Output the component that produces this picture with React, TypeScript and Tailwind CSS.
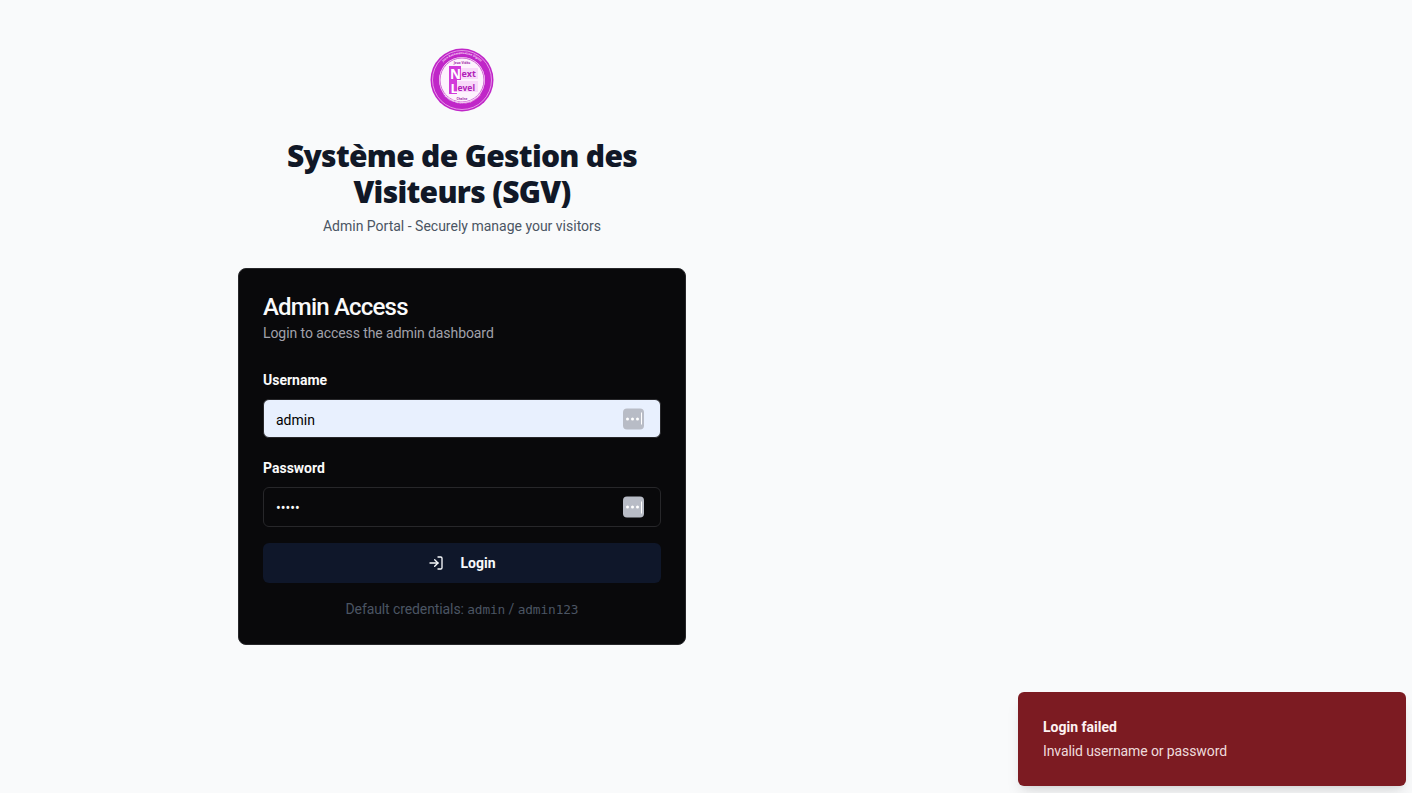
import { LogIn } from "lucide-react";

const Logo = () => (
  <svg width="64" height="64" viewBox="0 0 64 64" className="block">
    <circle cx="32" cy="32" r="31.5" fill="#c026c8" />
    <circle cx="32" cy="32" r="29.5" fill="none" stroke="#f3c6f2" strokeWidth="0.7" />
    <circle cx="32" cy="32" r="23" fill="#fdf2fd" />
    <circle cx="32" cy="32" r="22" fill="none" stroke="#c23cc6" strokeWidth="0.8" />
    <defs>
      <path id="ring" d="M 6 32 A 26 26 0 0 1 58 32" />
      <path id="ringb" d="M 8 36 A 24.5 24.5 0 0 0 56 36" />
    </defs>
    <text fontSize="3" fill="#f7dcf6" fontWeight="700" fontFamily="'Open Sans', sans-serif">
      <textPath href="#ring" startOffset="50%" textAnchor="middle">Jeux Automatisation Digital</textPath>
    </text>
    <text fontSize="3" fill="#f7dcf6" fontWeight="700" fontFamily="'Open Sans', sans-serif">
      <textPath href="#ringb" startOffset="50%" textAnchor="middle">Portfolio de Développement</textPath>
    </text>
    <text x="32" y="15.5" fontSize="3.2" textAnchor="middle" fill="#a01ca6" fontWeight="700" fontFamily="'Open Sans', sans-serif">Jeux Vidéo</text>
    <text x="32" y="52" fontSize="3.2" textAnchor="middle" fill="#a01ca6" fontWeight="700" fontFamily="'Open Sans', sans-serif">Chaîne</text>
    <rect x="19" y="18" width="12" height="14" fill="#d23ada" />
    <rect x="31" y="20" width="17" height="11" fill="#f8d8f9" />
    <rect x="19" y="32" width="8" height="14" fill="#d23ada" />
    <rect x="27" y="33" width="21" height="11" fill="#f8d8f9" />
    <text x="20" y="30.5" fontSize="13.5" fill="#fff" fontWeight="700" fontFamily="'Open Sans', sans-serif">N</text>
    <text x="31.5" y="29" fontSize="9" fill="#b021b8" fontWeight="700" fontFamily="'Open Sans', sans-serif">ext</text>
    <text x="20.5" y="44.5" fontSize="13" fill="#fff" fontWeight="700" fontFamily="'Open Sans', sans-serif">L</text>
    <text x="27.5" y="42.5" fontSize="8.5" fill="#b021b8" fontWeight="700" fontFamily="'Open Sans', sans-serif">evel</text>
  </svg>
);

const KeyBadge = () => (
  <span className="absolute right-[17px] top-1/2 -translate-y-1/2 flex h-[21px] w-[21px] items-center justify-center gap-[2px] rounded-[4px] bg-[#b8bcc6]">
    <span className="h-[3px] w-[3px] rounded-full bg-white" />
    <span className="h-[3px] w-[3px] rounded-full bg-white" />
    <span className="h-[3px] w-[3px] rounded-full bg-white" />
    <span className="h-[12px] w-px bg-white" />
  </span>
);

export default function App() {
  return (
    <div className="relative h-[793px] overflow-hidden bg-[#f9fafb] font-['Roboto',sans-serif]">
      <div className="flex w-[924px] flex-col items-center pt-[48px]">
        <Logo />
        <h1 className="mt-[26px] w-[448px] text-center font-['Noto_Sans',sans-serif] text-[30px] font-black leading-[36px] tracking-[-0.7px] text-[#111827]">
          Système de Gestion des Visiteurs (SGV)
        </h1>
        <p className="mt-[6px] text-[14px] leading-[20px] text-[#4b5563]">
          Admin Portal - Securely manage your visitors
        </p>

        <div className="mt-[32px] h-[377px] w-[448px] rounded-[8px] border border-[#27272a] bg-[#09090b] px-[24px] pt-[24px]">
          <h2 className="text-[24px] font-medium leading-[28px] tracking-[-0.8px] text-[#fafafa]">Admin Access</h2>
          <p className="mt-[2px] text-[14px] leading-[20px] tracking-[-0.08px] text-[#a1a1aa]">Login to access the admin dashboard</p>

          <label className="mt-[27px] block text-[14px] font-bold leading-[20px] text-[#fafafa]">Username</label>
          <div className="relative mt-[9px] h-[39px]">
            <div className="flex h-full items-center rounded-[6px] border border-[#27272a] bg-[#e8f0fe] px-[12px] pt-[3px] text-[14px] text-black">
              admin
            </div>
            <KeyBadge />
          </div>

          <label className="mt-[20px] block text-[14px] font-bold leading-[20px] text-[#fafafa]">Password</label>
          <div className="relative mt-[9px] h-[40px]">
            <div className="flex h-full items-center rounded-[6px] border border-[#27272a] bg-[#09090b] px-[12px] pt-[2px] text-[14px] text-[#fafafa]">
              •••••
            </div>
            <KeyBadge />
          </div>

          <button className="mt-[16px] flex h-[40px] w-full items-center justify-center gap-[16px] rounded-[6px] bg-[#0f172a] text-[14px] font-bold text-[#f8fafc]">
            <LogIn size={16} strokeWidth={2} className="text-[#f8fafc]" />
            Login
          </button>

          <p className="mt-[16px] text-center text-[14px] leading-[20px] tracking-[-0.1px] text-[#4b5563]">
            Default credentials: <span className="font-['DejaVu_Sans_Mono',monospace] text-[12.8px]">admin</span> / <span className="font-['DejaVu_Sans_Mono',monospace] text-[12.8px]">admin123</span>
          </p>
        </div>
      </div>

      <div className="absolute bottom-[7px] right-[6px] flex h-[94px] w-[388px] flex-col justify-center rounded-[6px] bg-[#7c1b22] pl-[25px] shadow-lg">
        <div className="text-[14px] font-bold leading-[20px] text-[#fef2f2]">Login failed</div>
        <div className="mt-[4px] text-[14px] leading-[20px] tracking-[-0.1px] text-[#fef2f2]/90">Invalid username or password</div>
      </div>
    </div>
  );
}
